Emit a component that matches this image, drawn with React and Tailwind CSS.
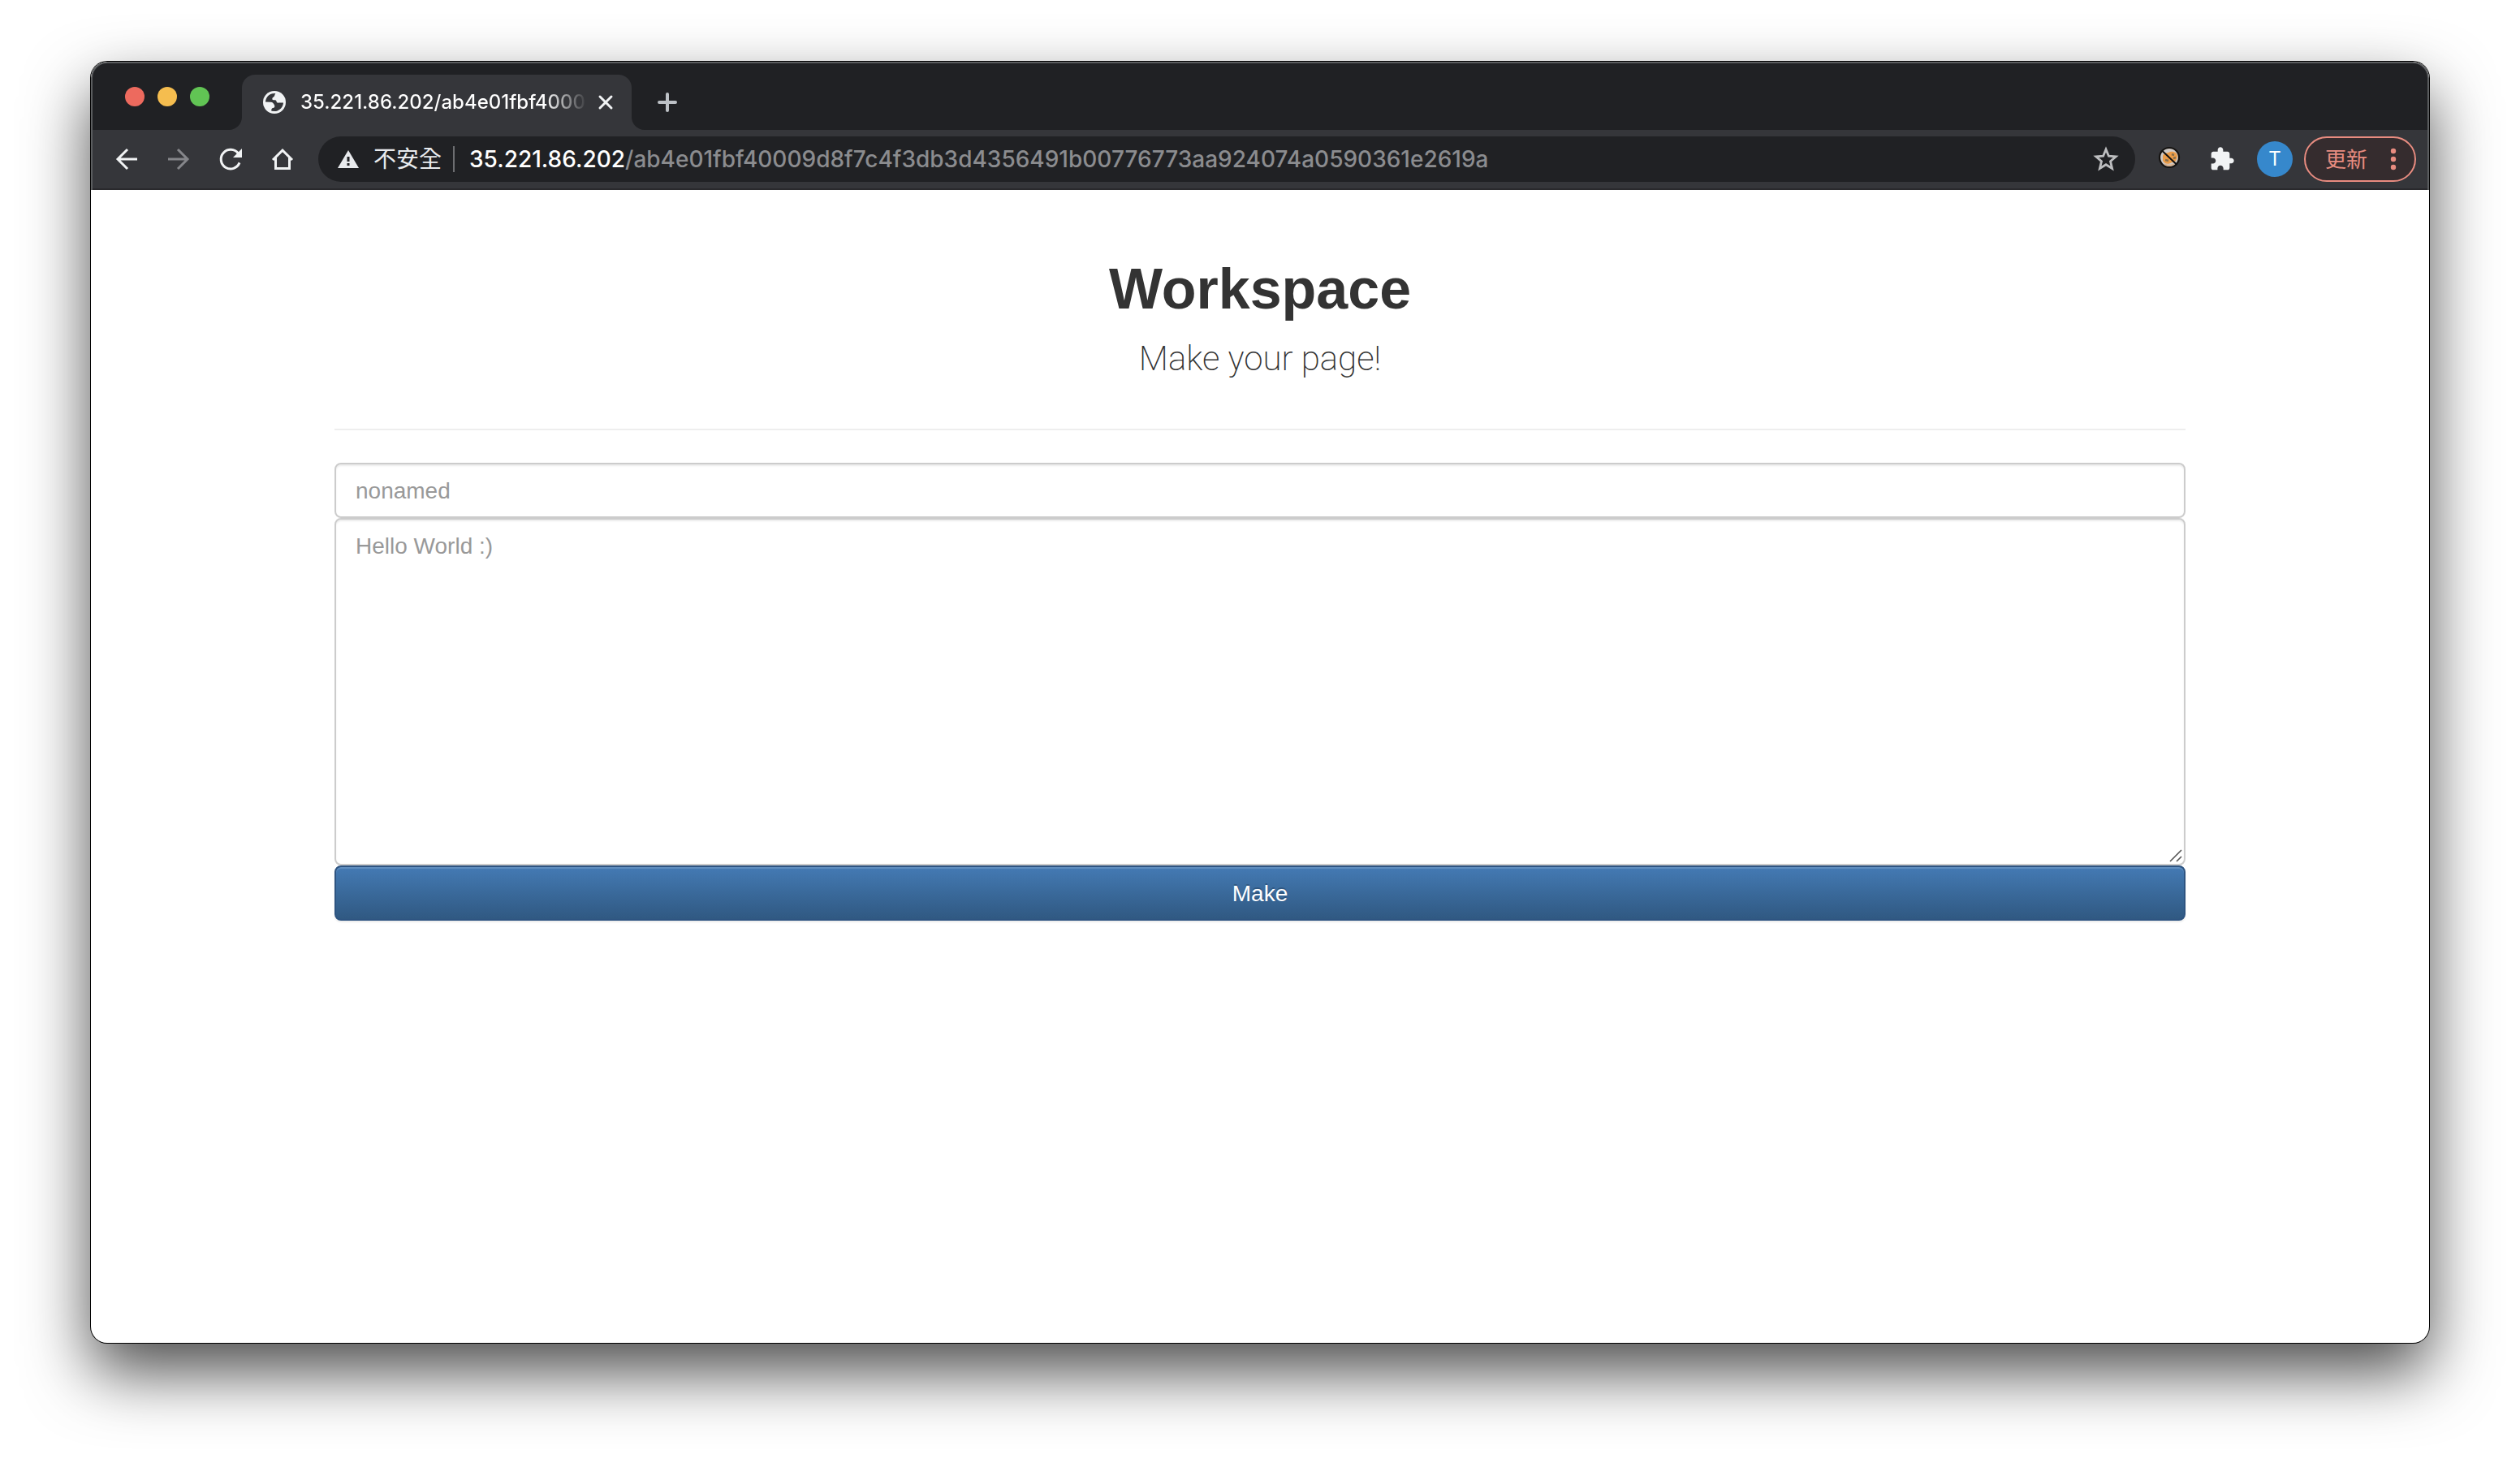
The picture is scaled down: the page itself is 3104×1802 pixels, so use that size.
import React from "react";

const navIcon = "flex w-10 h-10 items-center justify-center";

function Globe() {
  return (
    <svg className="h-7 w-7 shrink-0" viewBox="0 0 28 28" aria-hidden="true">
      <circle cx="14" cy="14" r="14" fill="#f1f3f4" />
      <path
        d="M3 13.6C3.2 8.4 7 4 11.6 3.2L15.4 3C14 4.6 14.6 6.6 13 7.4C11.4 8 11 9.6 11.6 10.8C13 11.8 16 10.6 16.4 12.6C16.8 14.6 18 15 19.6 14.6L25 14.4C24.8 19.6 20.6 24.2 15.2 25L10.4 24.8C10 22.6 10.6 21.2 12.4 21C14.6 20.6 14.6 18.8 14 17.4C13 15.4 12 14 9.6 13.8Z"
        fill="#35363a"
      />
    </svg>
  );
}

function TabStrip() {
  return (
    <div className="flex h-[82px] items-stretch">
      <div className="flex w-[168px] items-center gap-4 pl-10">
        <button aria-label="Close window" className="h-6 w-6 rounded-full bg-[#ed6a5e]" />
        <button aria-label="Minimize window" className="h-6 w-6 rounded-full bg-[#f5bd4f]" />
        <button aria-label="Zoom window" className="h-6 w-6 rounded-full bg-[#61c454]" />
      </div>
      <div className="flex self-end">
        <svg className="h-4 w-4 self-end" viewBox="0 0 16 16" aria-hidden="true">
          <path d="M16 0V16H0A16 16 0 0 0 16 0Z" fill="#35363a" />
        </svg>
        <div className="flex h-[68px] w-[480px] items-center rounded-t-2xl bg-[#35363a] pl-[26px]">
          <Globe />
          <span className="ml-[18px] w-[354px] whitespace-nowrap bg-gradient-to-r from-white from-85% to-transparent bg-clip-text text-[24px] font-medium leading-8 text-transparent">
            35.221.86.202/ab4e01fbf4000
          </span>
          <button aria-label="Close tab" className="ml-[10px] flex h-6 w-6 items-center justify-center">
            <svg className="h-5 w-5" viewBox="0 0 20 20" aria-hidden="true">
              <path d="M3 3L17 17M17 3L3 17" stroke="#f1f3f4" strokeWidth="3" strokeLinecap="round" />
            </svg>
          </button>
        </div>
        <svg className="h-4 w-4 self-end" viewBox="0 0 16 16" aria-hidden="true">
          <path d="M0 0V16H16A16 16 0 0 1 0 0Z" fill="#35363a" />
        </svg>
      </div>
      <div className="ml-4 flex items-center pt-[14px]">
        <button aria-label="New tab" className="flex h-6 w-6 items-center justify-center">
          <svg className="h-6 w-6" viewBox="0 0 24 24" aria-hidden="true">
            <path d="M12 2V22M2 12H22" stroke="#bdc1c6" strokeWidth="4" strokeLinecap="round" />
          </svg>
        </button>
      </div>
    </div>
  );
}

function Toolbar() {
  return (
    <div className="flex h-[74px] items-center border-b-2 border-[#29292c] bg-[#35363a] pl-[22px] pr-[14px]">
      <nav className="flex gap-6">
        <button aria-label="Back" className={navIcon}>
          <svg className="h-8 w-8" viewBox="0 0 32 32" fill="none" stroke="#f1f3f4" strokeWidth="3" aria-hidden="true">
            <path d="M29 16H5M17 4L5 16L17 28" />
          </svg>
        </button>
        <button aria-label="Forward" className={navIcon}>
          <svg className="h-8 w-8" viewBox="0 0 32 32" fill="none" stroke="#85868a" strokeWidth="3" aria-hidden="true">
            <path d="M3 16H27M15 4L27 16L15 28" />
          </svg>
        </button>
        <button aria-label="Reload" className={navIcon}>
          <svg className="h-8 w-8" viewBox="0 0 32 32" fill="none" aria-hidden="true">
            <path d="M27 20.4A11.8 11.8 0 1 1 25.4 9" stroke="#f1f3f4" strokeWidth="3" />
            <path d="M30 3V14H19Z" fill="#f1f3f4" />
          </svg>
        </button>
        <button aria-label="Home" className={navIcon}>
          <svg className="h-8 w-8" viewBox="0 0 32 32" fill="none" stroke="#f1f3f4" strokeWidth="3" aria-hidden="true">
            <path d="M4 17L16 5.2L28 17M7.5 14.5V27.5H24.5V14.5" />
          </svg>
        </button>
      </nav>
      <div className="ml-6 flex h-14 min-w-0 flex-1 items-center rounded-full bg-[#202124] pl-6 pr-5">
        <svg className="h-[22px] w-[26px] shrink-0" viewBox="0 0 26 22" aria-hidden="true">
          <path d="M13 0L26 22H0Z" fill="#e8eaed" />
          <path d="M11.5 8H14.5V14H11.5ZM11.5 16H14.5V19H11.5Z" fill="#202124" />
        </svg>
        <span className="ml-[18px] shrink-0 text-[28px] leading-10 text-[#e8eaed]">不安全</span>
        <span className="ml-[14px] h-8 w-[2px] shrink-0 bg-[#6d6e71]" />
        <div
          role="textbox"
          aria-label="Address"
          tabIndex={0}
          className="ml-[18px] min-w-0 flex-1 truncate text-[28px] font-medium leading-10 text-[#8b8c8f]"
        >
          <span className="text-white">35.221.86.202</span>
          /ab4e01fbf40009d8f7c4f3db3d4356491b00776773aa924074a0590361e2619a
        </div>
        <button aria-label="Bookmark this page" className="flex h-8 w-8 shrink-0 items-center justify-center">
          <svg className="h-8 w-8" viewBox="0 0 32 32" aria-hidden="true">
            <path d="M16 4L19.4 12.2L28.2 12.9L21.5 18.7L23.6 27.4L16 22.7L8.4 27.4L10.5 18.7L3.8 12.9L12.6 12.2Z" fill="none" stroke="#bdbec0" strokeWidth="2.8" />
          </svg>
        </button>
      </div>
      <div className="ml-5 flex items-center gap-[21px]">
        <button aria-label="Cookie extension" className="flex h-11 w-11 items-center justify-center">
          <svg className="mb-1 h-7 w-7" viewBox="0 0 28 28" aria-hidden="true">
            <circle cx="14" cy="14" r="12" fill="#cfcac6" stroke="#151311" strokeWidth="2.2" />
            <path d="M6 12C8 7 12 9 15 7C20 6 24 8 24 13C23 18 21 20 17 20C13 23 8 22 6 18Z" fill="#eb9c48" />
            <path d="M8 22C12 24.500 16 24.500 20 22" stroke="#d9b08c" strokeWidth="2" fill="none" />
            <path d="M9 17L13 18M17 10L20 11M19 15L22 14" stroke="#86704e" strokeWidth="2.4" />
            <path d="M5 5.5L23.500 23" stroke="#111" strokeWidth="2" />
          </svg>
        </button>
        <button aria-label="Extensions" className="flex h-11 w-11 items-center justify-center">
          <svg className="h-8 w-8" viewBox="0 0 24 24" fill="#f1f3f4" aria-hidden="true">
            <path d="M20.5 11H19V7c0-1.1-.9-2-2-2h-4V3.500C13 2.120 11.880 1 10.500 1S8 2.120 8 3.500V5H4c-1.100 0-1.990.9-1.990 2v3.800H3.500c1.490 0 2.700 1.210 2.700 2.700s-1.210 2.700-2.700 2.700H2V20c0 1.100.9 2 2 2h3.800v-1.500c0-1.490 1.210-2.700 2.700-2.700 1.490 0 2.700 1.210 2.700 2.700V22H17c1.100 0 2-.9 2-2v-4h1.500c1.380 0 2.500-1.120 2.500-2.500S21.880 11 20.500 11z" />
          </svg>
        </button>
        <button aria-label="Profile" className="h-11 w-11 rounded-full bg-[#3688cc] text-[24px] leading-11 text-white">
          T
        </button>
      </div>
      <button className="ml-[14px] flex h-14 w-[138px] items-center rounded-full border-2 border-[#e88c80] bg-[#352c2e] pl-6 text-[26px] text-[#e88c80]">
        <span>更新</span>
        <svg className="ml-7 h-7 w-2" viewBox="0 0 8 28" fill="#e88c80" aria-hidden="true">
          <circle cx="4" cy="4" r="3.2" />
          <circle cx="4" cy="14" r="3.2" />
          <circle cx="4" cy="24" r="3.2" />
        </svg>
      </button>
    </div>
  );
}

function Workspace() {
  const field =
    "block w-full rounded-lg border-2 border-[#ccc] bg-white px-6 text-[28px] leading-10 text-[#555] shadow-[inset_0_2px_2px_rgba(0,0,0,0.075)] outline-none placeholder:text-[#999] placeholder:opacity-100";
  return (
    <main className="mx-auto w-full max-w-[2340px] flex-1 px-[30px] font-['Liberation_Sans',sans-serif] text-[#333]">
      <div className="pt-[82px] text-center">
        <h1 className="text-[70px] font-bold leading-20">Workspace</h1>
        <p className="mt-4 font-['Roboto',sans-serif] text-[42px] font-extralight leading-[60px]">Make your page!</p>
      </div>
      <hr className="mb-10 mt-14 border-t-2 border-[#eee]" />
      <form onSubmit={(e) => e.preventDefault()}>
        <input aria-label="Title" type="text" placeholder="nonamed" className={`${field} h-[68px] pt-0.5`} />
        <div className="relative">
          <textarea
            aria-label="Content"
            placeholder="Hello World :)"
            className={`${field} h-[428px] resize-none py-[13px]`}
          />
          <svg className="absolute bottom-1 right-1 h-4 w-4" viewBox="0 0 16 16" fill="none" stroke="#555" strokeWidth="1.6" aria-hidden="true">
            <path d="M1 15L15 1M9 15L15 9" />
          </svg>
        </div>
        <button
          type="submit"
          className="block h-[68px] w-full rounded-lg border-2 border-[#2e5481] bg-gradient-to-b from-[#447ab4] to-[#305982] pt-0.5 text-[28px] leading-10 text-white shadow-[inset_0_2px_0_rgba(255,255,255,0.15),0_2px_2px_rgba(0,0,0,0.075)] [text-shadow:0_-2px_0_rgba(0,0,0,0.2)]"
        >
          Make
        </button>
      </form>
    </main>
  );
}

export default function App() {
  return (
    <div className="flex min-h-screen flex-col bg-white px-28 pb-[148px] pt-[76px] font-['Inter','Noto_Sans_CJK_TC',sans-serif]">
      <div className="flex flex-1 flex-col overflow-hidden rounded-[20px] bg-white shadow-[0_0_0_1px_#000,0_36px_80px_rgba(0,0,0,0.7)]">
        <header className="rounded-t-[20px] border-2 border-b-0 border-[#5b5d5f] bg-[#202124]">
          <TabStrip />
          <Toolbar />
        </header>
        <Workspace />
      </div>
    </div>
  );
}
